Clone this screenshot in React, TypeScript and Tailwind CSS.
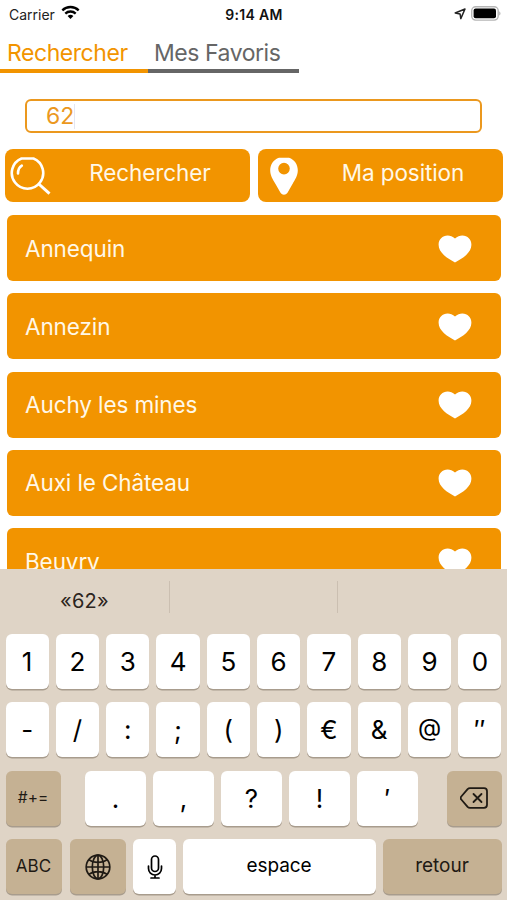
import type { ReactNode } from "react";
import clsx from "clsx";

const cities = ["Annequin", "Annezin", "Auchy les mines", "Auxi le Château", "Beuvry"];

const digits = ["1", "2", "3", "4", "5", "6", "7", "8", "9", "0"];
const symbols = ["-", "/", ":", ";", "(", ")", "€", "&", "@", "″"];
const punctuation = [".", ",", "?", "!", "′"];

function Wifi() {
  return (
    <svg width="19" height="15" viewBox="0 0 19 15" className="mb-[3px] ml-[6px]" fill="none" stroke="#000" strokeWidth="2.3">
      <path d="M1.3 5.3a11.8 11.8 0 0 1 16.4 0" />
      <path d="M4.3 8.6a7.5 7.5 0 0 1 10.4 0" />
      <path d="M9.5 14 6.6 11.1a4.2 4.2 0 0 1 5.8 0z" fill="#000" stroke="none" />
    </svg>
  );
}

function StatusBar() {
  return (
    <div className="grid h-[28px] shrink-0 grid-cols-3 items-center pr-[6px] pl-[9px] text-[14px] text-[#222]">
      <div className="flex items-center">
        <span>Carrier</span>
        <Wifi />
      </div>
      <div className="pr-[2px] text-center text-[14px] font-semibold tracking-[0.3px] text-[#111]">9:14 AM</div>
      <div className="flex items-center justify-end gap-[5px] pb-px">
        <svg width="12" height="12" viewBox="0 0 12 12" fill="none" stroke="#222" strokeWidth="1.5" strokeLinejoin="round">
          <path d="M11 1 6.8 10.6 6.1 6 1.2 5z" />
        </svg>
        <svg width="30" height="15" viewBox="0 0 30 15">
          <rect x="0.7" y="0.7" width="26.5" height="13.4" rx="4" fill="#fff" stroke="#b5b5b5" strokeWidth="1.4" />
          <rect x="2.6" y="2.6" width="22.4" height="9.6" rx="2" />
          <path d="M28.2 5.2v4.4c1.8-.8 1.8-3.6 0-4.4z" fill="#b5b5b5" />
        </svg>
      </div>
    </div>
  );
}

function Heart() {
  return (
    <svg width="34" height="28" viewBox="0 0 34 28" fill="#fff">
      <path d="M17 3.5C19.2 1.4 21.9.5 24.3.5 29.6.5 33.4 4.6 33.4 9.7c0 3.8-2 7.2-5.2 10.2C24.8 23 21 25 17 27.6 13 25 9.2 23 5.8 19.9 2.6 16.9.6 13.5.6 9.7.6 4.6 4.4.5 9.7.5c2.4 0 5.1.9 7.3 3z" />
    </svg>
  );
}

function SearchIcon() {
  return (
    <svg width="42" height="38" viewBox="0 0 42 38" fill="none" stroke="#fff" strokeWidth="2.6">
      <path d="M11.5 1.5h12A15.7 15.7 0 1 1 11.5 1.5z" strokeLinejoin="round" />
      <path d="M8 16.5c0-4 1.3-6.3 3.8-7.8" strokeLinecap="round" />
      <path d="m28.8 27 10.7 9.7" strokeWidth="3" />
    </svg>
  );
}

function PinIcon() {
  return (
    <svg width="28" height="38" viewBox="0 0 28 38" fill="#fff">
      <path
        fillRule="evenodd"
        d="M9 .7h10C24.5 2.6 27.8 7.6 27.8 13.2c0 5.5-2.7 9.2-5.3 13.8l-5 8.7c-1.7 2.6-5.3 2.6-7 0L5.5 27C2.9 22.4.2 18.7.2 13.2.2 7.6 3.5 2.6 9 .7zM14 5.8a5.8 5.8 0 1 0 0 11.6 5.8 5.8 0 0 0 0-11.6z"
      />
    </svg>
  );
}

function Key({ children, className, dark }: { children: ReactNode; className?: string; dark?: boolean }) {
  return (
    <div
      className={clsx(
        "flex h-[55px] items-center justify-center rounded-[6px] shadow-[0_1.5px_0_#a89c8d]",
        dark ? "bg-[#c5b193] text-[#1f1a14]" : "bg-white text-black",
        className
      )}
    >
      {children}
    </div>
  );
}

function Keyboard() {
  return (
    <div className="h-[331px] bg-[#dfd4c6]">
      <div className="grid h-[64.5px] grid-cols-3 items-center text-[20px] text-[#2c251d]">
        <div className="text-center tracking-[0.3px]">«62»</div>
        <div className="mb-[8px] h-[32px] border-x border-[#cbbfb1]" />
        <div />
      </div>

      <div className="flex flex-col gap-[13.5px] px-[5.5px]">
        <div className="grid grid-cols-10 gap-[7px] text-[26px]">
          {digits.map((d) => (
            <Key key={d}>{d}</Key>
          ))}
        </div>
        <div className="grid grid-cols-10 gap-[7px] text-[26px]">
          {symbols.map((s) => (
            <Key key={s} className={s === "@" ? "pb-[3px] text-[24px]" : ""}>
              {s}
            </Key>
          ))}
        </div>
        <div className="flex justify-between">
          <Key dark className="w-[55px] text-[15.5px]">#+=</Key>
          <div className="ml-[-4px] flex gap-[7px] text-[26px]">
            {punctuation.map((p) => (
              <Key key={p} className="w-[61px]">{p}</Key>
            ))}
          </div>
          <Key dark className="w-[55px]">
            <svg width="28" height="22" viewBox="0 0 28 22" fill="none" stroke="#1f1a14" strokeWidth="1.8" strokeLinecap="round" strokeLinejoin="round">
              <path d="M10 1.2h14a3 3 0 0 1 3 3v13.6a3 3 0 0 1-3 3H10c-1 0-1.7-.3-2.400-1L1.3 12.500c-.8-.9-.8-2.100 0-3L7.600 2.200c.7-.7 1.400-1 2.400-1z" />
              <path d="m13.500 7 8 8m0-8-8 8" />
            </svg>
          </Key>
        </div>
        <div className="flex gap-[7px]">
          <Key dark className="w-[56px] text-[17px]">ABC</Key>
          <Key dark className="ml-px w-[56px]">
            <svg width="26" height="26" viewBox="0 0 26 26" fill="none" stroke="#1f1a14" strokeWidth="1.7">
              <circle cx="13" cy="13" r="11.8" />
              <ellipse cx="13" cy="13" rx="5.7" ry="11.8" />
              <path d="M13 1v24M1 13h24M3.8 5.6c4.8 3.7 13.6 3.7 18.4 0M3.8 20.4c4.8-3.7 13.6-3.7 18.4 0" />
            </svg>
          </Key>
          <Key className="w-[43px] pl-px">
            <svg width="16" height="24" viewBox="0 0 16 24" fill="none" stroke="#000" strokeWidth="1.7" strokeLinecap="round">
              <rect x="4.5" y="1" width="7" height="15.5" rx="3.5" />
              <path d="M1.5 11v2.5a6.5 6.5 0 0 0 13 0V11M8 20v3M4 23h8" />
            </svg>
          </Key>
          <Key className="w-[193px] text-[19px] tracking-[-0.1px]">espace</Key>
          <Key dark className="flex-1 text-[19px]">retour</Key>
        </div>
      </div>
    </div>
  );
}

export default function App() {
  return (
    <div className="flex h-[900px] w-[507px] flex-col overflow-hidden bg-white font-['Inter',sans-serif]">
      <div className="flex h-[569px] shrink-0 flex-col overflow-hidden">
        <StatusBar />

        <div className="flex h-[45px] shrink-0 text-[23px] leading-[50px] tracking-[-0.45px]">
          <div className="w-[148px] border-b-4 border-[#f29400] pl-[7px] text-[#f29400]">Rechercher</div>
          <div className="w-[151px] border-b-4 border-[#666] pl-[6px] text-[#666]">Mes Favoris</div>
        </div>

        <div className="mx-[25px] mt-[26px] flex h-[34px] shrink-0 items-center rounded-[6px] border-2 border-[#eb981e] pl-[19px] text-[23px] text-[#eb981e]">
          62
          <span className="h-[25px] w-px bg-[#e3e6f3]" />
        </div>

        <div className="mt-[16px] flex shrink-0 gap-[8px] pr-[4px] pl-[5px] text-[22.5px] tracking-[-0.1px] text-[#fff8e8]">
          <button className="flex h-[53px] w-[245px] items-center rounded-[8px] bg-[#f29400] pl-[5px]">
            <SearchIcon />
            <span className="flex-1 pr-[2px] pb-[5px] text-center">Rechercher</span>
          </button>
          <button className="flex h-[53px] w-[245px] items-center rounded-[8px] bg-[#f29400] pl-[12px]">
            <PinIcon />
            <span className="flex-1 pb-[5px] pl-[5px] text-center">Ma position</span>
          </button>
        </div>

        <ul className="mt-[13px] flex shrink-0 flex-col gap-[12.25px] pr-[6px] pl-[7px]">
          {cities.map((city) => (
            <li
              key={city}
              className="flex h-[66px] items-center justify-between rounded-[6px] bg-[#f29400] pt-px pr-[29px] pl-[18px] text-[22.5px] tracking-[-0.1px] text-[#fff8e8]"
            >
              <span>{city}</span>
              <Heart />
            </li>
          ))}
        </ul>
      </div>

      <Keyboard />
    </div>
  );
}
